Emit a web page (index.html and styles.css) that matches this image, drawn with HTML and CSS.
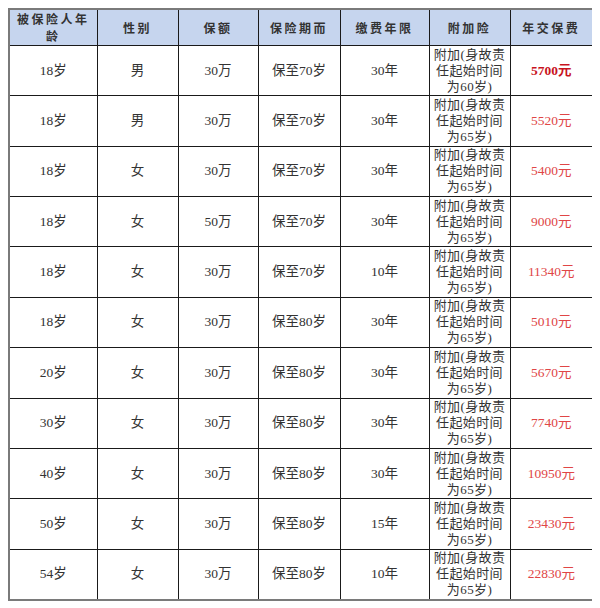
FILE: index.html
```html
<!DOCTYPE html>
<html lang="zh-CN">
<head>
<meta charset="utf-8">
<title>保费表</title>
<link rel="stylesheet" href="styles.css">
</head>
<body>
<table class="rate">
  <colgroup>
    <col class="c1"><col class="c2"><col class="c3"><col class="c4"><col class="c5"><col class="c6"><col class="c7">
  </colgroup>
  <thead>
    <tr>
      <th>被保险人年<br>龄</th><th>性别</th><th>保额</th><th>保险期而</th><th>缴费年限</th><th>附加险</th><th>年交保费</th>
    </tr>
  </thead>
  <tbody>
    <tr><td>18岁</td><td>男</td><td>30万</td><td>保至70岁</td><td>30年</td><td class="extra">附加(身故责<br>任起始时间<br>为60岁)</td><td class="fee strong">5700元</td></tr>
    <tr><td>18岁</td><td>男</td><td>30万</td><td>保至70岁</td><td>30年</td><td class="extra">附加(身故责<br>任起始时间<br>为65岁)</td><td class="fee">5520元</td></tr>
    <tr><td>18岁</td><td>女</td><td>30万</td><td>保至70岁</td><td>30年</td><td class="extra">附加(身故责<br>任起始时间<br>为65岁)</td><td class="fee">5400元</td></tr>
    <tr><td>18岁</td><td>女</td><td>50万</td><td>保至70岁</td><td>30年</td><td class="extra">附加(身故责<br>任起始时间<br>为65岁)</td><td class="fee">9000元</td></tr>
    <tr><td>18岁</td><td>女</td><td>30万</td><td>保至70岁</td><td>10年</td><td class="extra">附加(身故责<br>任起始时间<br>为65岁)</td><td class="fee">11340元</td></tr>
    <tr><td>18岁</td><td>女</td><td>30万</td><td>保至80岁</td><td>30年</td><td class="extra">附加(身故责<br>任起始时间<br>为65岁)</td><td class="fee">5010元</td></tr>
    <tr><td>20岁</td><td>女</td><td>30万</td><td>保至80岁</td><td>30年</td><td class="extra">附加(身故责<br>任起始时间<br>为65岁)</td><td class="fee">5670元</td></tr>
    <tr><td>30岁</td><td>女</td><td>30万</td><td>保至80岁</td><td>30年</td><td class="extra">附加(身故责<br>任起始时间<br>为65岁)</td><td class="fee">7740元</td></tr>
    <tr><td>40岁</td><td>女</td><td>30万</td><td>保至80岁</td><td>30年</td><td class="extra">附加(身故责<br>任起始时间<br>为65岁)</td><td class="fee">10950元</td></tr>
    <tr><td>50岁</td><td>女</td><td>30万</td><td>保至80岁</td><td>15年</td><td class="extra">附加(身故责<br>任起始时间<br>为65岁)</td><td class="fee">23430元</td></tr>
    <tr><td>54岁</td><td>女</td><td>30万</td><td>保至80岁</td><td>10年</td><td class="extra">附加(身故责<br>任起始时间<br>为65岁)</td><td class="fee">22830元</td></tr>
  </tbody>
</table>
</body>
</html>
```
FILE: styles.css
```css
html, body {
  background: #ffffff;
}
body {
  margin: 8px;
  font-family: "Liberation Serif", "Noto Sans CJK SC", serif;
  color: #333333;
}
.rate {
  border-collapse: collapse;
  table-layout: fixed;
  width: 584px;
  border: 2px solid #7a7a7a;
}
.c1 { width: 88px; }
.c2 { width: 81px; }
.c3 { width: 80px; }
.c4 { width: 82px; }
.c5 { width: 89px; }
.c6 { width: 81px; }
.c7 { width: 83px; }
.rate th, .rate td {
  border: 1px solid #1a1a1a;
  text-align: center;
  vertical-align: middle;
  padding: 0;
  white-space: nowrap;
}
.rate th {
  background: #c6d5ee;
  height: 34px;
  font-family: "Noto Sans CJK SC", sans-serif;
  font-weight: 700;
  font-size: 12px;
  line-height: 17.4px;
  letter-spacing: 2.5px;
  color: #333333;
}
.rate td {
  height: 49.4px;
  font-size: 13.5px;
  line-height: 16px;
}
.rate td.extra {
  font-size: 13px;
  line-height: 16px;
  letter-spacing: 0.4px;
}
.rate td.fee {
  color: #e04646;
}
.rate td.fee.strong {
  color: #c8141e;
  font-weight: 700;
}
```
